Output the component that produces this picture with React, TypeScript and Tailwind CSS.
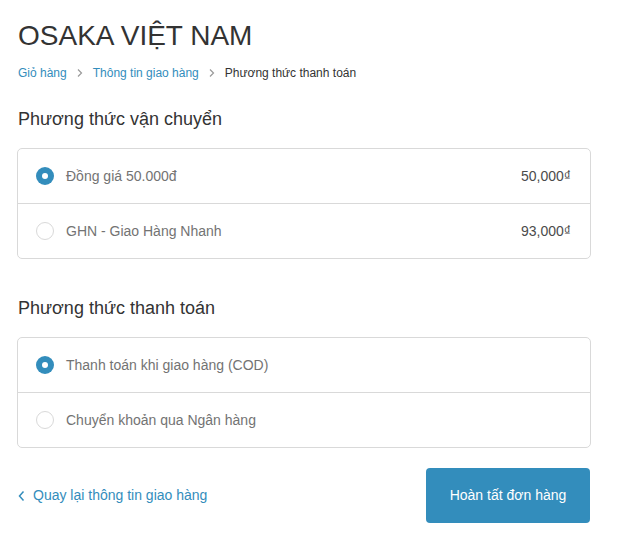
const shipping = [
  { id: 1, label: "Đồng giá 50.000đ", price: "50,000₫", checked: true },
  { id: 2, label: "GHN - Giao Hàng Nhanh", price: "93,000₫", checked: false },
];

const payments = [
  { id: 1, label: "Thanh toán khi giao hàng (COD)", checked: true },
  { id: 2, label: "Chuyển khoản qua Ngân hàng", checked: false },
];

const Crumb = () => (
  <svg className="mx-[8px] h-[10px] w-[10px] shrink-0" viewBox="0 0 10 10" fill="none">
    <path d="M3 1.5 6.5 5 3 8.5" stroke="#9a9a9a" strokeWidth="1.2" />
  </svg>
);

const Radio = ({ checked }: { checked: boolean }) =>
  checked ? (
    <span className="flex h-[18px] w-[18px] shrink-0 items-center justify-center rounded-full bg-[#338dbc]">
      <span className="h-[6px] w-[6px] rounded-full bg-white" />
    </span>
  ) : (
    <span className="h-[18px] w-[18px] shrink-0 rounded-full border border-[#d9d9d9] bg-white" />
  );

export default function App() {
  return (
    <div className="min-h-[551px] w-[640px] bg-white pt-[18px] font-['Liberation_Sans',Arial,sans-serif] text-[#333333]">
      <div className="ml-[17px] w-[574px]">
        {/* Header */}
        <h1 className="pl-px text-[28px] leading-[36px] font-normal text-[#333333]">OSAKA VIỆT NAM</h1>
        <nav className="mt-[10px] flex items-center pl-px text-[12px] leading-[18px]">
          <a className="text-[#338dbc]">Giỏ hàng</a>
          <Crumb />
          <a className="text-[#338dbc]">Thông tin giao hàng</a>
          <Crumb />
          <span className="text-[#333333]">Phương thức thanh toán</span>
        </nav>

        {/* Shipping */}
        <h2 className="mt-[25px] pl-px text-[18px] leading-[24px] font-normal">Phương thức vận chuyển</h2>
        <div className="mt-[17px] rounded-[5px] border border-[#d9d9d9]">
          {shipping.map((s, i) => (
            <label
              key={s.id}
              className={`flex h-[54px] items-center gap-[12px] pr-[19px] pl-[18px] text-[14px] ${i > 0 ? "h-[55px] border-t border-[#d9d9d9]" : ""}`}
            >
              <Radio checked={s.checked} />
              <span className="flex-1 text-[#737373]">{s.label}</span>
              <span className="text-[#4b4b4b]">{s.price}</span>
            </label>
          ))}
        </div>

        {/* Payment */}
        <h2 className="mt-[37px] pl-px text-[18px] leading-[24px] font-normal">Phương thức thanh toán</h2>
        <div className="mt-[17px] rounded-[5px] border border-[#d9d9d9]">
          {payments.map((p, i) => (
            <label
              key={p.id}
              className={`flex h-[54px] items-center gap-[12px] pl-[18px] text-[14px] ${i > 0 ? "h-[55px] border-t border-[#d9d9d9]" : ""}`}
            >
              <Radio checked={p.checked} />
              <span className="text-[#737373]">{p.label}</span>
            </label>
          ))}
        </div>

        {/* Footer */}
        <div className="mt-[20px] flex items-center justify-between">
          <a className="flex items-center gap-[8px] pl-px text-[14px] text-[#338dbc]">
            <svg className="h-[12px] w-[7px]" viewBox="0 0 7 12" fill="none">
              <path d="M5.5 1.5 1.5 6l4 4.5" stroke="#338dbc" strokeWidth="1.5" />
            </svg>
            Quay lại thông tin giao hàng
          </a>
          <button className="mr-px h-[55px] w-[164px] rounded-[4px] bg-[#338dbc] text-[14px] text-white">
            Hoàn tất đơn hàng
          </button>
        </div>
      </div>
    </div>
  );
}
